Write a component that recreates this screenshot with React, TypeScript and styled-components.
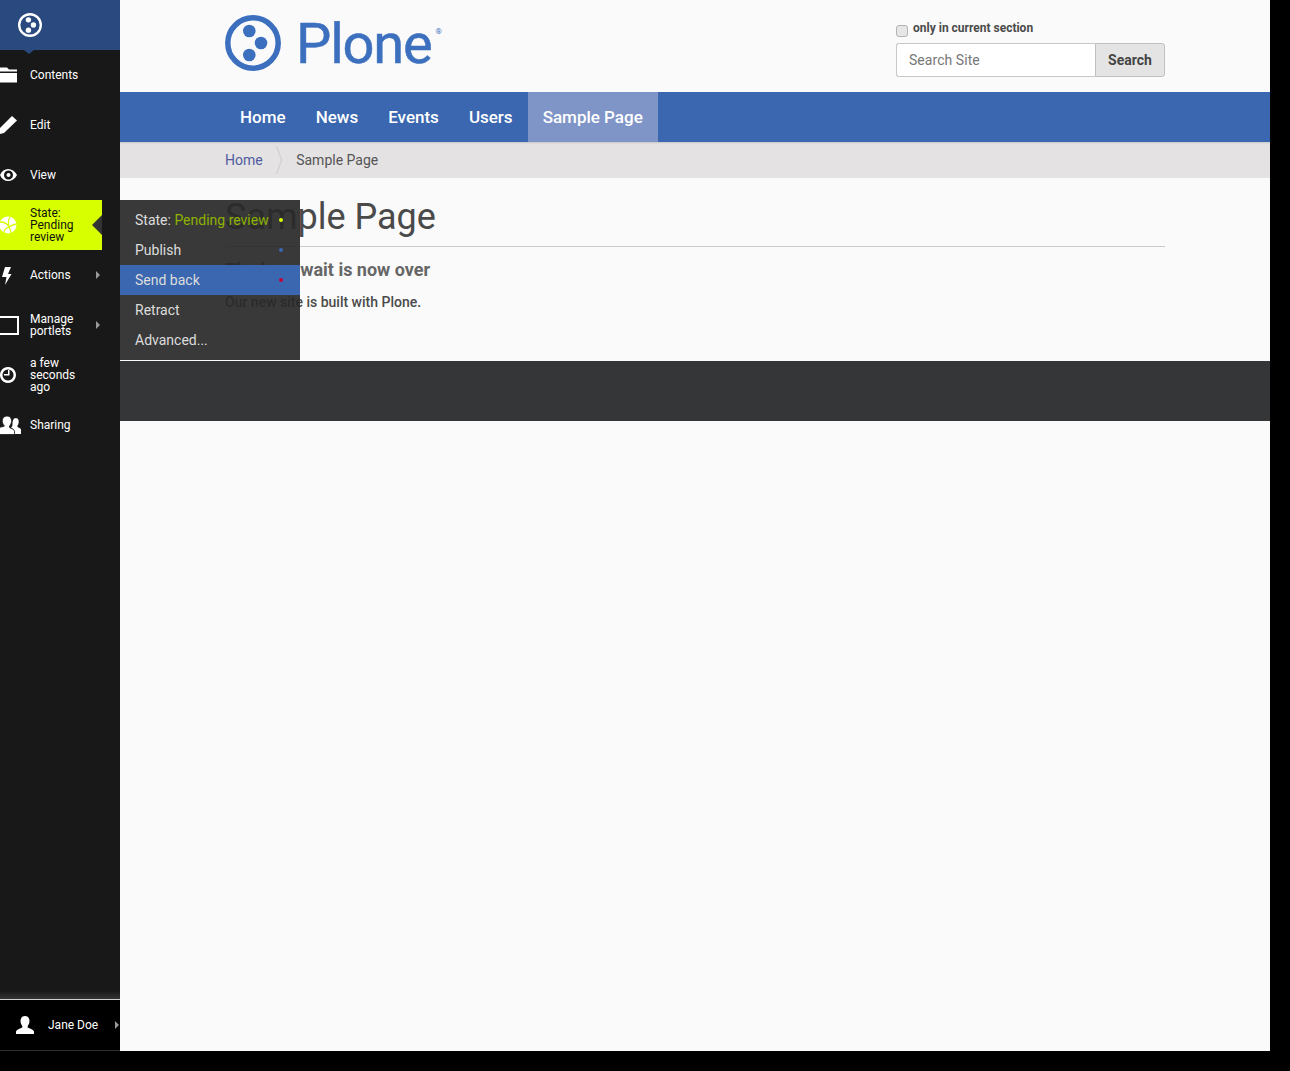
import React from "react";
import styled, { createGlobalStyle } from "styled-components";

const Global = createGlobalStyle`
  html, body { margin: 0; padding: 0; height: 100%; background: #000; }
  body { font-family: Roboto, "Liberation Sans", sans-serif; overflow: hidden; }
  * { box-sizing: border-box; }
`;

const Frame = styled.div`
  display: flex;
  width: 1270px;
  height: 1051px;
`;

const Sidebar = styled.nav`
  position: relative;
  z-index: 2;
  display: flex;
  flex-direction: column;
  flex: 0 0 120px;
  background: #181818;
`;

const Brand = styled.div`
  position: relative;
  display: flex;
  align-items: center;
  height: 50px;
  padding-left: 18px;
  background: #2a4a7f;

  &::after {
    content: "";
    position: absolute;
    left: 24px;
    bottom: -4px;
    border-left: 5px solid transparent;
    border-right: 5px solid transparent;
    border-top: 4px solid #2a4a7f;
  }
`;

const Item = styled.div<{ $active?: boolean }>`
  position: relative;
  display: flex;
  align-items: center;
  width: ${({ $active }) => ($active ? "102px" : "120px")};
  height: 50px;
  flex: 0 0 50px;
  font-size: 12px;
  line-height: 12px;
  color: ${({ $active }) => ($active ? "#111" : "#fff")};
  background: ${({ $active }) => ($active ? "#d7ff00" : "transparent")};
`;

const IconSlot = styled.span`
  display: flex;
  flex: 0 0 30px;
  align-items: center;
`;

const ItemLabel = styled.span`
  width: 60px;
`;

const Caret = styled.span`
  position: absolute;
  right: 20px;
  top: 21px;
  border-top: 4px solid transparent;
  border-bottom: 4px solid transparent;
  border-left: 4px solid #999;
`;

const Notch = styled.span`
  position: absolute;
  right: 0;
  top: 15px;
  border-top: 10px solid transparent;
  border-bottom: 10px solid transparent;
  border-right: 10px solid #333;
`;

const Spacer = styled.div`
  flex: 1;
  background: linear-gradient(to bottom, #181818 calc(100% - 8px), #333 100%);
`;

const UserRow = styled.div`
  position: relative;
  display: flex;
  align-items: center;
  height: 52px;
  padding-left: 15px;
  gap: 13px;
  font-size: 12px;
  color: #fff;
  background: #000;
  border-top: 1px solid #ccc;
  border-bottom: 1px solid #2c2c2c;
`;

const UserCaret = styled(Caret)`
  right: 1px;
  top: 21px;
`;

const StateMenu = styled.ul`
  position: absolute;
  left: 120px;
  top: 0;
  width: 180px;
  height: 160px;
  margin: 0;
  padding: 5px 0;
  list-style: none;
  background: rgba(40, 40, 40, 0.92);
`;

const MenuRow = styled.li<{ $selected?: boolean }>`
  position: relative;
  height: 30px;
  padding-left: 15px;
  font-size: 14px;
  line-height: 30px;
  color: #ddd;
  background: ${({ $selected }) => ($selected ? "#3a67b0" : "transparent")};
`;

const StateName = styled.span`
  color: #8fb300;
`;

const Dot = styled.span<{ $color: string }>`
  position: absolute;
  right: 17px;
  top: 13px;
  width: 4px;
  height: 4px;
  border-radius: 50%;
  background: ${({ $color }) => $color};
`;

const Main = styled.div`
  flex: 1;
  background: #fafafa;
`;

const Header = styled.header`
  display: flex;
  justify-content: space-between;
  height: 92px;
  padding: 0 105px;
`;

const Logo = styled.div`
  display: flex;
  align-items: flex-start;
  padding-top: 15px;
  color: #3c70bf;
`;

const LogoText = styled.span`
  margin-left: 15px;
  font-size: 56px;
  font-weight: 400;
  line-height: 58px;
  letter-spacing: -1.2px;
  -webkit-text-stroke: 0.5px #3c70bf;
`;

const LogoMark = styled.span`
  margin: 12px 0 0 4px;
  font-size: 8px;
  line-height: 9px;
`;

const SearchBox = styled.form`
  display: flex;
  flex-direction: column;
  width: 269px;
  padding-top: 21px;
`;

const ScopeLabel = styled.label`
  display: flex;
  align-items: flex-start;
  height: 22px;
  font-size: 12px;
  line-height: 14px;
  font-weight: 700;
  color: #4a4a4a;
`;

const ScopeCheck = styled.input`
  appearance: none;
  width: 12px;
  height: 12px;
  margin: 4px 5px 0 0;
  background: #e6e6e6;
  border: 1px solid #b4b4b4;
  border-radius: 3px;
`;

const SearchRow = styled.div`
  display: flex;
  height: 34px;
`;

const SearchInput = styled.input`
  width: 199px;
  padding: 0 12px;
  font: 14px Roboto, sans-serif;
  letter-spacing: 0.05px;
  background: #fff;
  border: 1px solid #c8c8c8;
  border-right: 0;
  border-radius: 3px 0 0 3px;

  &::placeholder {
    color: #777;
    opacity: 1;
  }
`;

const SearchButton = styled.button`
  width: 70px;
  padding: 0;
  font: 700 14px Roboto, sans-serif;
  color: #444;
  background: #e4e4e4;
  border: 1px solid #c0c0c0;
  border-radius: 0 3px 3px 0;
`;

const NavBar = styled.div`
  display: flex;
  height: 50px;
  padding-left: 105px;
  background: #3a67b0;
`;

const NavLink = styled.a<{ $current?: boolean }>`
  padding: 0 15px;
  font-size: 17px;
  font-weight: 500;
  line-height: 51px;
  color: #fff;
  background: ${({ $current }) => ($current ? "#7f95c7" : "transparent")};
`;

const Crumbs = styled.div`
  display: flex;
  align-items: center;
  height: 36px;
  padding-left: 105px;
  font-size: 14px;
  color: #555;
  background: #e4e2e3;
  box-shadow: inset 0 2px 2px -1px rgba(0, 0, 0, 0.12);
`;

const CrumbLink = styled.a`
  color: #4f5da0;
`;

const CrumbSeparator = styled.svg`
  margin: 0 14.5px 0 13px;
`;

const Content = styled.main`
  height: 183px;
  margin: 0 105px;
  padding-top: 19px;
  color: #4a4a4a;
`;

const Title = styled.h1`
  margin: 0;
  padding-bottom: 9px;
  font-size: 36px;
  font-weight: 400;
  line-height: 40px;
  border-bottom: 1px solid #ccc;
`;

const Lead = styled.h2`
  margin: 13px 0 0;
  font-size: 18px;
  font-weight: 700;
  line-height: 20px;
  color: #666;
`;

const Body = styled.p`
  margin: 12px 0 0;
  font-size: 14px;
  font-weight: 500;
  line-height: 20px;
`;

const Footer = styled.footer`
  height: 60px;
  background: #353638;
`;

const PloneIcon = ({ size, color }: { size: number; color: string }) => (
  <svg width={size} height={size} viewBox="0 0 56 56">
    <circle cx="28" cy="28" r="25.2" fill="none" stroke={color} strokeWidth="5.5" />
    <circle cx="24.3" cy="16" r="6.3" fill={color} />
    <circle cx="36" cy="28" r="6.3" fill={color} />
    <circle cx="24.3" cy="40" r="6.3" fill={color} />
  </svg>
);

const Glyph = ({ children }: { children: React.ReactNode }) => (
  <svg width="24" height="24" viewBox="0 0 24 24">
    {children}
  </svg>
);

const menu = [
  {
    label: "Contents",
    icon: <path fill="#fff" d="M0 4.500h7l2 2h8V8.500H0zM0 10h17v9.500H0z" />,
  },
  {
    label: "Edit",
    icon: <path fill="#fff" d="M12 3l5 4.500L4 20l-4 1v-6z" />,
  },
  {
    label: "View",
    icon: (
      <path
        fill="#fff"
        fillRule="evenodd"
        d="M0 12C3 4 13 4 17 12 13 20 3 20 0 12zM8.500 7.500a4.500 4.500 0 1 0 .01 0zM8.500 10a2 2 0 1 1-.01 0z"
      />
    ),
  },
];

const menuAfter = [
  {
    label: "Actions",
    caret: true,
    icon: <path fill="#fff" d="M5 4h6L8 11h3.500L5 22l1.500-8H2z" />,
  },
  {
    label: "Manage portlets",
    caret: true,
    icon: <path fill="#fff" d="M0 3h19v19H0v-2h17V5H0z" />,
  },
  {
    label: "a few seconds ago",
    icon: (
      <path
        fill="#fff"
        fillRule="evenodd"
        d="M8 4a8 8 0 1 1-.01 0zM8 6.500a5.500 5.500 0 1 0 .01 0zM8 7h1.500v5.500H4V11h4z"
      />
    ),
  },
  {
    label: "Sharing",
    icon: (
      <>
        <path
          fill="#fff"
          d="M15.500 5c2.500 0 3.500 2 3.200 4.500-.2 1.500-.8 2.500-1.200 3v1.500c1 .7 3 1 3.500 2.500V21h-7v-3c0-1.500-1.500-2.500-3-3.200 1-.8 1.500-2 1.500-3.500 0-3 .5-6.300 3.500-6.300z"
        />
        <path
          fill="#fff"
          stroke="#181818"
          strokeWidth=".8"
          d="M7 3c3.300 0 4.800 2.500 4.500 5.500-.2 2-1 3.500-2 4.500v1.500c1.500 1 4.500 1.500 5 3.500V21.500H-1V14.500c1-.5 3.500-.5 5.500-1.500V13c-1-1-2-2.500-2.200-4.500C2 5.500 3.700 3 7 3z"
        />
      </>
    ),
  },
];

const actions = [
  { label: "Publish", color: "#3a67b0" },
  { label: "Send back", color: "#c4003a", selected: true },
  { label: "Retract" },
  { label: "Advanced..." },
];

export default function App() {
  return (
    <>
      <Global />
      <Frame>
        <Sidebar>
          <Brand>
            <PloneIcon size={24} color="#fff" />
          </Brand>
          {menu.map((m) => (
            <Item key={m.label}>
              <IconSlot>
                <Glyph>{m.icon}</Glyph>
              </IconSlot>
              <ItemLabel>{m.label}</ItemLabel>
            </Item>
          ))}
          <Item $active>
            <IconSlot>
              <svg width="24" height="24" viewBox="0 0 24 24">
                <circle cx="8" cy="12" r="8.500" fill="#fff" />
                <path
                  stroke="#d7ff00"
                  strokeWidth="1.300"
                  fill="none"
                  d="M0 9c4 0 7 1 9 5M10 4c-2 3-2 6-1 10M9 14c3-2 5-3 8-3M4 20c0-3 2-5 5-6M9 14c1 2 2 4 2 6"
                />
              </svg>
            </IconSlot>
            <ItemLabel>State: Pending review</ItemLabel>
            <Notch />
            <StateMenu>
              <MenuRow>
                State: <StateName>Pending review</StateName>
                <Dot $color="#d7ff00" />
              </MenuRow>
              {actions.map((a) => (
                <MenuRow key={a.label} $selected={a.selected}>
                  {a.label}
                  {a.color && <Dot $color={a.color} />}
                </MenuRow>
              ))}
            </StateMenu>
          </Item>
          {menuAfter.map((m) => (
            <Item key={m.label}>
              <IconSlot>
                <Glyph>{m.icon}</Glyph>
              </IconSlot>
              <ItemLabel>{m.label}</ItemLabel>
              {m.caret && <Caret />}
            </Item>
          ))}
          <Spacer />
          <UserRow>
            <svg width="20" height="20" viewBox="0 0 20 20">
              <path
                fill="#fff"
                d="M10 1c3 0 4.500 2 4.500 5 0 2-1 4-1.800 5v1.500c1.500 1 5.300 1.500 6.300 4V19H1v-2.500c1-2.500 4.800-3 6.300-4V11C6.500 10 5.500 8 5.500 6c0-3 1.500-5 4.500-5z"
              />
            </svg>
            Jane Doe
            <UserCaret />
          </UserRow>
        </Sidebar>
        <Main>
          <Header>
            <Logo>
              <PloneIcon size={56} color="#3c70bf" />
              <LogoText>Plone</LogoText>
              <LogoMark>®</LogoMark>
            </Logo>
            <SearchBox>
              <ScopeLabel>
                <ScopeCheck type="checkbox" />
                only in current section
              </ScopeLabel>
              <SearchRow>
                <SearchInput placeholder="Search Site" />
                <SearchButton type="button">Search</SearchButton>
              </SearchRow>
            </SearchBox>
          </Header>
          <NavBar>
            <NavLink>Home</NavLink>
            <NavLink>News</NavLink>
            <NavLink>Events</NavLink>
            <NavLink>Users</NavLink>
            <NavLink $current>Sample Page</NavLink>
          </NavBar>
          <Crumbs>
            <CrumbLink>Home</CrumbLink>
            <CrumbSeparator width="6" height="30" viewBox="0 0 6 30">
              <path d="M0.500 1l5 14-5 14" fill="none" stroke="#ccc" />
            </CrumbSeparator>
            Sample Page
          </Crumbs>
          <Content>
            <Title>Sample Page</Title>
            <Lead>The long wait is now over</Lead>
            <Body>Our new site is built with Plone.</Body>
          </Content>
          <Footer />
        </Main>
      </Frame>
    </>
  );
}
